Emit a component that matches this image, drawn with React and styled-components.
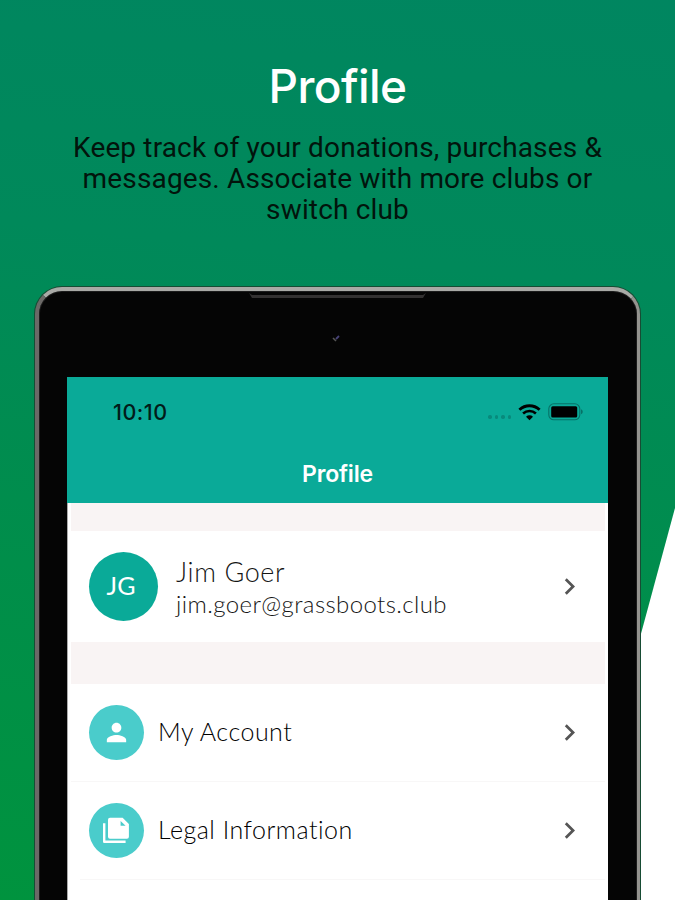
import React from "react";
import styled, { createGlobalStyle } from "styled-components";
import { MdChevronRight, MdPerson } from "react-icons/md";

const GlobalStyles = createGlobalStyle`
  * {
    box-sizing: border-box;
  }
  body {
    margin: 0;
    background-color: #fff;
  }
`;

const PageStyles = styled.main`
  position: relative;
  isolation: isolate;
  display: flex;
  flex-direction: column;
  width: 675px;
  height: 900px;
  overflow: hidden;
  &::before {
    content: "";
    position: absolute;
    inset: 0;
    z-index: -1;
    background: linear-gradient(186deg, #008660 0%, #00895a 30%, #008e4a 65%, #00933e 100%);
    clip-path: polygon(0 0, 100% 0, 100% 508px, 569px 100%, 0 100%);
  }
`;

const IntroStyles = styled.header`
  flex-shrink: 0;
  height: 287px;
  padding-top: 53px;
  text-align: center;
`;

const Title = styled.h1`
  margin: 0;
  font-family: Inter, "Liberation Sans", sans-serif;
  font-size: 46px;
  font-weight: 500;
  line-height: 66px;
  letter-spacing: -0.6px;
  color: #fff;
`;

const Description = styled.p`
  margin: 13px 0 0;
  font-family: Roboto, "Liberation Sans", sans-serif;
  font-size: 28px;
  line-height: 31px;
  letter-spacing: 0.15px;
  color: #02140c;
  span {
    display: block;
  }
`;

const Device = styled.section`
  position: relative;
  display: flex;
  flex-direction: column;
  flex-shrink: 0;
  width: 605px;
  height: 660px;
  margin-left: 35px;
  padding: 86px 28px 0;
  border: 4px solid;
  border-color: #a9aaa6 #94938f #666 #6b6967;
  border-right-width: 3px;
  border-radius: 27px 27px 0 0;
  background-color: #050505;
  box-shadow: inset 0 0 0 1px #1c1c1c, 0 0 0 1px #174c34;
`;

const Speaker = styled.div`
  position: absolute;
  top: 2px;
  left: 210px;
  width: 177px;
  height: 5px;
  background-color: #333131;
  clip-path: polygon(0 0, 3px 2px, 174px 2px, 100% 0, 174px 5px, 3px 5px);
`;

const Camera = styled.svg`
  position: absolute;
  top: 43px;
  left: 293px;
  width: 8px;
  height: 9px;
`;

const Screen = styled.div`
  flex: 1;
  margin-right: 1px;
  background-color: #fff;
  border-left: 1px solid #aaa;
  font-family: Lato, "Liberation Sans", sans-serif;
`;

const AppHeader = styled.div`
  height: 126px;
  margin-left: -1px;
  padding: 0 25px 0 46px;
  background-color: #0aaa98;
  font-family: Inter, "Liberation Sans", sans-serif;
`;

const StatusBar = styled.div`
  display: flex;
  align-items: center;
  height: 70px;
`;

const Time = styled.span`
  flex: 1;
  font-size: 21.5px;
  font-weight: 500;
  letter-spacing: 0.5px;
  color: #021c19;
`;

const Dots = styled.div`
  display: flex;
  gap: 3px;
  margin: 10px 7px 0 0;
  i {
    width: 3.5px;
    height: 3.5px;
    border-radius: 50%;
    background-color: #088a7c;
  }
`;

const HeaderTitle = styled.div`
  margin-left: -21px;
  padding-top: 13px;
  font-size: 23px;
  font-weight: 600;
  line-height: 28px;
  letter-spacing: -0.2px;
  text-align: center;
  color: #fff;
`;

const Band = styled.div`
  height: ${(props) => props.$height}px;
  margin: 0 3px;
  background-color: #f9f4f4;
`;

const RowStyles = styled.div`
  display: flex;
  align-items: center;
  height: ${(props) => props.$height}px;
  padding: 0 22px 0 21px;
  color: #151515;
`;

const Divider = styled.div`
  height: 1px;
  margin: 0 3px 0 ${(props) => props.$inset}px;
  background-color: #f8f7f7;
`;

const Circle = styled.div`
  display: flex;
  align-items: center;
  justify-content: center;
  flex-shrink: 0;
  width: ${(props) => props.$size}px;
  height: ${(props) => props.$size}px;
  padding-right: 1px;
  border-radius: 50%;
  background-color: ${(props) => props.$color};
  color: #fff;
`;

const Avatar = styled(Circle)`
  padding: 0 5px 3px 0;
  font-size: 25px;
`;

const Person = styled.div`
  flex: 1;
  margin-left: 18px;
  padding-top: 1px;
  font-weight: 300;
`;

const Name = styled.div`
  font-size: 27px;
  line-height: 33px;
  letter-spacing: 0.6px;
`;

const Email = styled.div`
  font-size: 24px;
  line-height: 32px;
  letter-spacing: 0.4px;
`;

const Label = styled.div`
  flex: 1;
  margin-left: 14px;
  padding-bottom: 3px;
  font-size: 25px;
  font-weight: 300;
  letter-spacing: 0.5px;
  color: #000;
`;

const Chevron = styled(MdChevronRight)`
  width: 33px;
  height: 33px;
  color: #555;
`;

const Wifi = styled.svg`
  width: 23px;
  height: 17px;
  margin-right: 7px;
`;

const WifiIcon = () => (
  <Wifi viewBox="0 0 23 17" fill="none">
    <path d="M1.4 5.7C7.2.4 15.8.4 21.6 5.7" stroke="#000" strokeWidth="2.9" />
    <path d="M5.1 9.4C8.8 6.2 14.2 6.2 17.9 9.4" stroke="#000" strokeWidth="2.7" />
    <path d="M8 12.7C10 10.9 13 10.9 15 12.7L11.5 16.3Z" fill="#000" />
  </Wifi>
);

const BatteryIcon = () => (
  <svg width="35" height="18" viewBox="0 0 35 18" fill="none">
    <rect x=".8" y=".8" width="31" height="16" rx="5" stroke="#077267" strokeWidth="1.1" />
    <rect x="3.2" y="3.2" width="26" height="11.4" rx="1.5" fill="#000" />
    <path d="M33 6.3C35.3 7.3 35.3 10.3 33 11.3Z" fill="#077267" />
  </svg>
);

const DocumentsIcon = () => (
  <svg width="28" height="28" viewBox="0 0 28 28" fill="none">
    <path d="M2.2 6.2V24.8H23.6" stroke="#fff" strokeWidth="2.4" strokeLinejoin="round" />
    <path
      d="M8 .8H20.6L26.9 7.1V19.7Q26.9 21.7 24.9 21.7H8Q6 21.7 6 19.7V2.8Q6 .8 8 .8ZM18.6 4V8.7H23.6Z"
      fill="#fff"
      fillRule="evenodd"
    />
  </svg>
);

const MenuRow = ({ label, icon }) => {
  return (
    <RowStyles $height={97}>
      <Circle $size={55} $color="#4acccb">
        {icon}
      </Circle>
      <Label>{label}</Label>
      <Chevron />
    </RowStyles>
  );
};

const App = () => {
  return (
    <PageStyles>
      <GlobalStyles />
      <IntroStyles>
        <Title>Profile</Title>
        <Description>
          <span>Keep track of your donations, purchases &amp;</span>
          <span>messages. Associate with more clubs or</span>
          <span>switch club</span>
        </Description>
      </IntroStyles>
      <Device>
        <Speaker />
        <Camera viewBox="0 0 8 9">
          <path d="M1 4L4 7" stroke="#555" strokeWidth="1.6" />
          <path d="M4 5L7 2" stroke="#474277" strokeWidth="1.8" />
        </Camera>
        <Screen>
          <AppHeader>
            <StatusBar>
              <Time>10:10</Time>
              <Dots>
                <i />
                <i />
                <i />
                <i />
              </Dots>
              <WifiIcon />
              <BatteryIcon />
            </StatusBar>
            <HeaderTitle>Profile</HeaderTitle>
          </AppHeader>
          <Band $height={28} />
          <RowStyles $height={111}>
            <Avatar $size={69} $color="#0aaa98">
              JG
            </Avatar>
            <Person>
              <Name>Jim Goer</Name>
              <Email>jim.goer@grassboots.club</Email>
            </Person>
            <Chevron />
          </RowStyles>
          <Band $height={42} />
          <MenuRow label="My Account" icon={<MdPerson size={29} />} />
          <Divider $inset={3} />
          <MenuRow label="Legal Information" icon={<DocumentsIcon />} />
          <Divider $inset={12} />
        </Screen>
      </Device>
    </PageStyles>
  );
};

export default App;
